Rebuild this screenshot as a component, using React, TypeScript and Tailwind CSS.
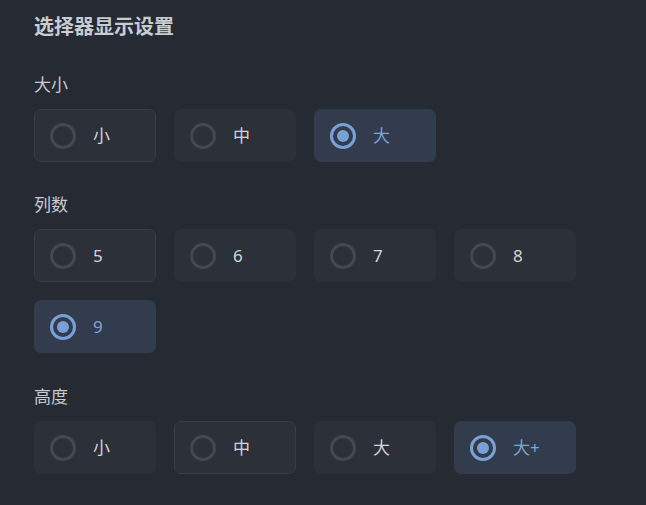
import React, { useState } from "react";

type Opt = { label: string; bordered?: boolean };

const font = { fontFamily: '"Noto Sans", "Noto Sans CJK SC", sans-serif' };

function Radio({ checked }: { checked: boolean }) {
  return checked ? (
    <span className="flex h-[26px] w-[26px] shrink-0 items-center justify-center rounded-full border-[3px] border-[#7aa0d8]">
      <span className="h-[12px] w-[12px] rounded-full bg-[#7aa0d8]" />
    </span>
  ) : (
    <span className="h-[26px] w-[26px] shrink-0 rounded-full border-[3px] border-[#434852]" />
  );
}

function Group({
  title,
  options,
  value,
  onChange,
  top,
}: {
  title: string;
  options: Opt[];
  value: string;
  onChange: (v: string) => void;
  top: string;
}) {
  return (
    <div className={top}>
      <div className="text-[17px] leading-[24px] text-[#c8ccd2]">{title}</div>
      <div className="mt-[12px] flex w-[560px] flex-wrap gap-x-[18px] gap-y-[18px]">
        {options.map((o) => {
          const on = o.label === value;
          return (
            <button
              key={o.label}
              onClick={() => onChange(o.label)}
              className={
                "flex h-[53px] w-[122px] items-center gap-[17px] rounded-[7px] border pl-[15px] text-left " +
                (on
                  ? "border-transparent bg-[#323c4c] text-[#7ea3d8]"
                  : o.bordered
                  ? "border-[#383c47] bg-[#2c3039] text-[#d2d5da]"
                  : "border-transparent bg-[#2c3039] text-[#d2d5da]")
              }
            >
              <Radio checked={on} />
              <span className="text-[17px] leading-[24px]">{o.label}</span>
            </button>
          );
        })}
      </div>
    </div>
  );
}

export default function App() {
  const [size, setSize] = useState("大");
  const [cols, setCols] = useState("9");
  const [height, setHeight] = useState("大+");

  return (
    <div className="h-[505px] w-[646px] bg-[#262a33] pl-[34px] pt-[13px]" style={font}>
      <h1 className="text-[20px] font-bold leading-[28px] text-[#c9ccd1]">选择器显示设置</h1>

      <Group
        top="mt-[32px]"
        title="大小"
        options={[{ label: "小", bordered: true }, { label: "中" }, { label: "大" }]}
        value={size}
        onChange={setSize}
      />

      <Group
        top="mt-[31px]"
        title="列数"
        options={[{ label: "5", bordered: true }, { label: "6" }, { label: "7" }, { label: "8" }, { label: "9" }]}
        value={cols}
        onChange={setCols}
      />

      <Group
        top="mt-[32px]"
        title="高度"
        options={[{ label: "小" }, { label: "中", bordered: true }, { label: "大" }, { label: "大+" }]}
        value={height}
        onChange={setHeight}
      />
    </div>
  );
}
